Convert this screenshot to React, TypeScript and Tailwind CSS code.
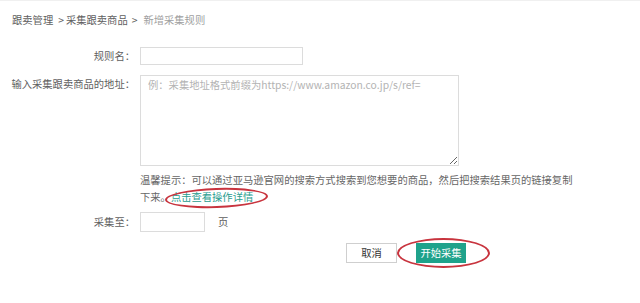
import React from "react";

export default function App() {
  return (
    <div className="w-[640px] h-[303px] bg-white border-t border-[#f0f0f0] text-[10.3px] text-[#606060] font-['Noto_Sans_CJK_SC','Microsoft_YaHei',sans-serif] overflow-hidden">
      <div className="pt-[11px] pl-[12px] leading-[16px] whitespace-nowrap flex items-center">
        <span>跟卖管理</span>
        <span className="ml-[5px] mr-[2px]">&gt;</span>
        <span>采集跟卖商品</span>
        <span className="ml-[4px] mr-[6px]">&gt;</span>
        <span className="text-[#a0a0a0]">新增采集规则</span>
      </div>

      <div className="mt-[19px] flex items-center">
        <div className="w-[140px] pr-[5px] text-right leading-[16px]">规则名：</div>
        <input className="w-[163px] h-[18px] border border-[#dcdcdc] bg-white outline-none" />
      </div>

      <div className="mt-[10px] flex items-start">
        <div className="w-[140px] pr-[5px] text-right leading-[16px] pt-[1px] whitespace-nowrap">输入采集跟卖商品的地址：</div>
        <textarea
          className="w-[319px] h-[91px] border border-[#dcdcdc] bg-white outline-none px-[7px] py-[1px] leading-[16px] text-[10.3px] placeholder:text-[#b3b3b3]"
          placeholder="例：采集地址格式前缀为https://www.amazon.co.jp/s/ref="
        />
      </div>

      <div className="mt-[5px] pl-[140px] leading-[17px] text-[#666] whitespace-nowrap">
        温馨提示：可以通过亚马逊官网的搜索方式搜索到您想要的商品，然后把搜索结果页的链接复制
        <br />
        下来。
        <span className="relative text-[#2a9d8f]">
          点击查看操作详情
          <span className="absolute left-[-6px] top-[-1px] w-[103px] h-[20px] rounded-[50%] border-2 border-[#c8343e] rotate-[-2deg] pointer-events-none" />
        </span>
      </div>

      <div className="mt-[7px] flex items-center">
        <div className="w-[140px] pr-[5px] text-right leading-[16px]">采集至：</div>
        <input className="w-[65px] h-[20px] border border-[#dcdcdc] bg-white outline-none" />
        <span className="ml-[13px]">页</span>
      </div>

      <div className="mt-[11px] flex items-center pl-[346px]">
        <button className="w-[51px] h-[20px] border border-[#cfcfcf] bg-white text-[#333] text-[10.3px] leading-[18px]">取消</button>
        <div className="relative ml-[19px]">
          <button className="w-[50px] h-[20px] bg-[#1fa28b] text-white text-[10.3px] leading-[20px]">开始采集</button>
          <span className="absolute left-[-19px] top-[-5px] w-[93px] h-[30px] rounded-[50%] border-2 border-[#c8343e] pointer-events-none" />
        </div>
      </div>
    </div>
  );
}
